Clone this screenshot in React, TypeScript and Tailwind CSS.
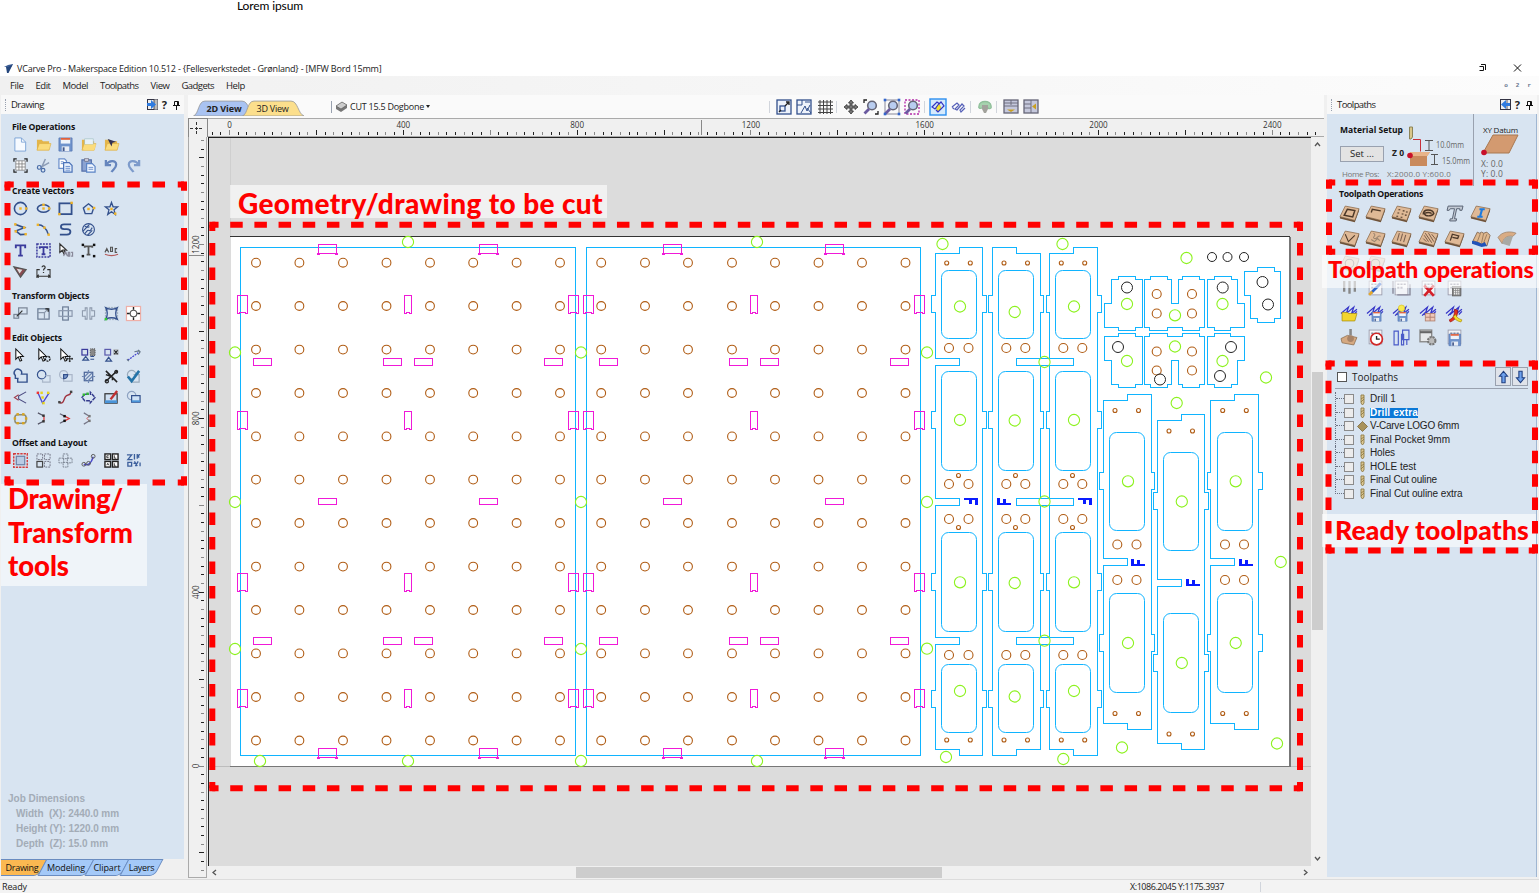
import React, { useLayoutEffect, useRef } from "react";

/* Text whose tracking is tuned so that it fills a given width. */
function T({ w, c = "", children }: { w: number; c?: string; children: string }) {
  const ref = useRef<HTMLSpanElement>(null);
  useLayoutEffect(() => {
    const el = ref.current;
    if (!el) return;
    el.style.letterSpacing = "0px";
    const natural = el.getBoundingClientRect().width;
    el.style.letterSpacing = `${(w - natural) / children.length}px`;
  }, [w, children]);
  return (
    <span ref={ref} className={`inline-block shrink-0 whitespace-pre ${c}`}>
      {children}
    </span>
  );
}

const N = "#33508c";
const Y = "#f0b429";

function Ic({ children, s = 16 }: { children?: React.ReactNode; s?: number }) {
  return (
    <svg width={s} height={s} viewBox="0 0 16 16" fill="none" stroke={N} strokeWidth="1.3" className="shrink-0 overflow-visible">
      {children}
    </svg>
  );
}

const dot = (x: number, y: number, f = Y) => <rect key={`${x}-${y}-${f}`} x={x - 1.3} y={y - 1.3} width="2.6" height="2.6" fill={f} stroke="none" />;

const folder = (
  <>
    <path d="M1 3h5l1.5 1.5H14V14H1z" fill="#e3b54a" stroke="none" />
    <path d="M1 14 3.5 7H16l-2 7z" fill="#fbdc7c" stroke="#d9a93c" strokeWidth=".6" />
  </>
);
const page = <path d="M2 1h7l4.5 4.5V15H2z" fill="#f6faff" stroke="#7ba3d6" strokeWidth="1" />;
const floppy = (
  <>
    <path d="M1 1h14v14H1z" fill="#6f93cc" stroke="#5578b4" strokeWidth=".8" />
    <rect x="3" y="1" width="10" height="6" fill="#eef3fa" stroke="none" />
    <rect x="3" y="1" width="10" height="2" fill="#e0603c" stroke="none" />
    <rect x="4" y="10" width="8" height="5" fill="#e8edf5" stroke="none" />
    <rect x="5" y="11" width="2" height="4" fill="#41588a" stroke="none" />
  </>
);
const cursor = <path d="M3 1v11l2.6-2.5L7.5 14l1.8-.8-1.9-4.2H11z" fill="#fff" stroke="#111" strokeWidth="1.1" />;

const fileIcons: React.ReactNode[][] = [
  [
    <>{page}<path d="M9 1v4.5h4.5" stroke="#7ba3d6" strokeWidth=".9" /></>,
    folder,
    floppy,
    <>{folder}<rect x="4" y="2" width="9" height="6" fill="#e8f2f8" stroke="#9bb" strokeWidth=".6" /><path d="M3 14 5 8h11l-2 6z" fill="#fbdc7c" stroke="none" /></>,
    <>{folder}<path d="M4 2l9 3-4 1-1 4z" fill="#335" stroke="none" /></>,
  ],
  [
    <><path d="M3 3h10v10H3zM6.3 3v10M9.6 3v10M3 6.3h10M3 9.6h10" fill="#fff" stroke="#777" strokeWidth=".8" /><path d="M1 4V1h3M12 1h3v3M15 12v3h-3M4 15H1v-3" stroke="#222" /></>,
    <><path d="M10 1 6 10M14 5 5 10" stroke="#8b9bb5" strokeWidth="1.6" /><circle cx="3.5" cy="10" r="2" stroke="#4a6da8" /><circle cx="7.5" cy="13" r="2" stroke="#4a6da8" /></>,
    <><path d="M1 1h6l2 2v8H1z" fill="#fff" stroke="#6b8fcb" /><path d="M6 5h6l3 3v7H6z" fill="#e7f0fc" stroke="#4a72b8" /><path d="M8 9h5M8 11h5M8 13h5M3 4h3M3 6h3" stroke="#5b84c6" strokeWidth=".9" /></>,
    <><rect x="1" y="2" width="10" height="12" fill="#8ba3d2" stroke="#556fa8" /><rect x="4" y="0.5" width="4" height="3" fill="#c9c9d8" stroke="#667" strokeWidth=".6" /><path d="M6 6h6l3 3v6H6z" fill="#eff5fe" stroke="#5b84c6" /><path d="M8 10h5M8 12h5" stroke="#5b84c6" strokeWidth=".9" /></>,
    <path d="M2 2v5.5h5.5M2.500 7C5 2.500 13 1.500 13 7c0 4-3 4.500-5 8" stroke="#6585bd" strokeWidth="2.4" />,
    <path d="M14 2v5.500H8.500M13.500 7C11 2.500 3 1.500 3 7c0 4 3 4.500 5 8" stroke="#7d9bcb" strokeWidth="2.400" />,
  ],
];

const createIcons: React.ReactNode[][] = [
  [
    <><circle cx="8" cy="8" r="6.500" strokeWidth="1.700" />{dot(8, 8)}{dot(14, 8)}</>,
    <><ellipse cx="8" cy="8" rx="6.500" ry="4" strokeWidth="1.700" />{dot(8, 4)}{dot(8, 8)}{dot(14, 8)}</>,
    <><rect x="1.500" y="2.500" width="13" height="11.500" strokeWidth="1.900" />{dot(14.500, 2)}{dot(1.500, 14)}</>,
    <><path d="M8 3 13.500 7.500 11.500 13.500h-7L2.500 7.500z" strokeWidth="1.500" />{dot(8, 8.500)}{dot(14, 7.500)}</>,
    <><path d="m8 1.500 1.700 4.700 4.800.1-3.800 3.100 1.300 4.900L8 11.500l-4 2.800 1.300-4.900L1.500 6.300l4.800-.1z" strokeWidth="1.400" />{dot(8, 8.500)}{dot(12, 13.500)}</>,
  ],
  [
    <><path d="M2 2.500 12 6 3 9.500 8 13.500 14 13" strokeWidth="1.700" />{dot(2.500, 2.500)}{dot(12, 6)}{dot(3, 10)}{dot(13.500, 13)}</>,
    <><path d="M2 3c6 0 9 4 11 10" strokeWidth="1.500" />{dot(2, 3)}{dot(9, 6)}{dot(13.500, 13.500)}</>,
    <path d="M14 2.500H6.500C2 2.500 2 7.500 6.500 7.500h3c5 0 5 5.500 0 6H2" strokeWidth="1.900" />,
    <><circle cx="8" cy="8" r="6.300" strokeWidth="1.200" /><path d="M2 10 9 2.500M4 12.500 7 9c1-1 2 1 3 0l2-3M7 14l5-5M4 5c2-1 3 2 5 0" strokeWidth="1.200" /></>,
  ],
  [
    <path d="M3 5.500v-3h10v3M8 2.500v11M5.500 13.500h5" stroke="#3a3a9c" strokeWidth="2" />,
    <><rect x="1" y="1" width="14" height="14" strokeDasharray="2 1.200" stroke="#3a3a9c" strokeWidth="1.600" /><path d="M4 6V4.500h8V6M8 4.500v8M6 12h4" stroke="#3a3a9c" strokeWidth="1.900" /></>,
    <><path d="M2 1v9l2.500-2.300L6.500 12 8 11.200 6.200 7.500H9z" fill="#fff" stroke="#333" /><path d="m6 14 2-5 2 5M11 14v-4h1.500v4zM14 10h1.500v4H14" stroke="#889" /></>,
    <><path d="M4 5V3.500h8V5M8 3.500v9M6 12.500h4" stroke="#555" strokeWidth="1.900" />{[[2, 2], [14, 2], [14, 14], [2, 14]].map(([a, b]) => dot(a, b, "#111"))}</>,
    <><path d="M1 12c5 2 9 2 14 0" stroke="#b45a5a" /><path d="m1 10 2-4 2 4M7 9V4.500h2V9zM14 6h-2v4h2" stroke="#555" strokeWidth="1.200" /></>,
  ],
  [
    <><path d="m1 3 13 3-6 8z" fill="#8a4a50" stroke="#555" /><path d="m4 5 6 1-3 4z" fill="#ddd" stroke="none" /></>,
    <><path d="M1 15V6h3M15 15V6h-3M1 13h14M3 11.500 1 13l2 1.500M13 11.500 15 13l-2 1.500" stroke="#333" strokeWidth="1.100" /><path d="M6.500 3.500C6.500 1.500 10 1.500 9.700 4 9 5.500 8 5 8 7M8 8.500v1.200" stroke="#333" strokeWidth="1.300" /></>,
  ],
];

const transformIcons: React.ReactNode[][] = [
  [
    <><rect x="6" y="2" width="9" height="6.500" stroke="#7a8696" /><rect x="1" y="9" width="5" height="4" stroke="#7a8696" /><path d="m4 11 6-6" stroke="#333" /></>,
    <><rect x="2" y="3" width="12" height="11" stroke="#6a7b93" /><path d="M2 7h7v7M9 7l4-4" stroke="#8a97aa" /><path d="M10 3h3v3" stroke="#222" /></>,
    <><rect x="5" y="1" width="6" height="14" stroke="#6d7d96" /><rect x="1" y="5" width="14" height="6" stroke="#8c99ae" /></>,
    <><path d="M6.500 2v12H4.500v-3H1.500V5h3V2zM9.500 2v12h2v-3h3V5h-3V2z" stroke="#8c98aa" strokeWidth="1.100" /></>,
    <><rect x="1.500" y="1.500" width="13" height="13" stroke="#89a" strokeWidth=".8" strokeDasharray="2 1" /><path d="M2 2c4 2 8 2 12 0-2 4-2 8 0 12-4-2-8-2-12 0 2-4 2-8 0-12z" strokeWidth="1.500" />{dot(2, 14, "#3c3")}</>,
    <><rect x=".5" y=".5" width="15" height="15" fill="#fff" stroke="#efb0a8" /><circle cx="8" cy="8" r="3.500" stroke="#555" strokeWidth="1.200" /><path d="M8 1v3M8 12v3M1 8h3M12 8h3" stroke="#222" strokeWidth="1.500" /></>,
  ],
];

const lens = <><circle cx="6" cy="6" r="4.500" /><path d="M7 11v3h8V7h-5" stroke="#a9b6c9" /></>;
const editIcons: React.ReactNode[][] = [
  [
    cursor,
    <>{cursor}<circle cx="12.500" cy="11.500" r="2.500" stroke="#111" strokeWidth="1.400" strokeDasharray="2 .8" /></>,
    <>{cursor}<path d="M12.500 8v7M9 11.500h7M11.500 9h2M11.500 14h2M10 10.500v2M15 10.500v2" stroke="#111" strokeWidth=".9" /></>,
    <><rect x="1" y="1.500" width="6" height="6" stroke="#3a3a9c" /><path d="m2 13 3-4 3 4zM10 9h4M10 12h4" /><rect x="10" y="1" width="5" height="7" fill="#888" stroke="#555" strokeDasharray="1 1" /></>,
    <><rect x="1" y="1.500" width="6" height="6" stroke="#5a5aac" /><path d="m2 14 3-4 3 4z" /><rect x="10.500" y="2" width="4.500" height="5" stroke="#999" strokeWidth=".8" /><path d="m11 2.500 3.500 4M14.500 2.500l-3.500 4" stroke="#222" /></>,
    <><path d="M2 13 13 5" stroke="#3a3acc" strokeDasharray="2 1" /><path d="M9 4l5-1M1 12l2 2M13 2l2 2-2 3" stroke="#678" /></>,
  ],
  [
    <path d="M6 10H2.500V7A4 4 0 1 1 9 5.500h6V14H5v-4" strokeWidth="1.500" />,
    lens,
    <><circle cx="6" cy="6" r="4.300" stroke="#a9b6c9" /><rect x="6" y="6" width="9" height="7" stroke="#a9b6c9" /><path d="M6 10.300V6h4.300A4.300 4.300 0 0 1 6 10.300z" fill="#7f9ccc" /></>,
    <><rect x="3.500" y="3.500" width="9" height="9" stroke="#4a6498" /><path d="M4 8l4.500-4.500M4 12l8-8M7.500 12.500 12 8M1 8h2M13 8h2M8 1v2M8 13v2" stroke="#6f87b3" /></>,
    <><path d="M2 2 14 14M14 2 2 13M2 6l6 2M9 12V8" stroke="#222" strokeWidth="1.600" /><circle cx="3" cy="13" r="1.700" stroke="#222" /><circle cx="13" cy="3" r="1.500" stroke="#222" /></>,
    <><circle cx="6" cy="6" r="4.500" stroke="#9ab" /><path d="M8 6h6v8H5" stroke="#9ab" /><path d="m2 8 4 5 8-11" stroke="#2473a8" strokeWidth="2.800" /></>,
  ],
  [
    <><path d="M14 2 6 6.500v3L14 14" stroke="#4a4a80" strokeWidth="1.200" /><path d="M6 5 1.500 8 6 11" stroke="#a04050" strokeWidth="1.200" /></>,
    <><path d="M2 3 7 14 14 3" stroke="#4a4acc" strokeWidth="1.400" />{dot(2, 3, "#e33")}{dot(6, 3, "#e8d41a")}{dot(13, 3, "#e8d41a")}{dot(7, 8, "#e8d41a")}{dot(8, 14, "#e8d41a")}</>,
    <><path d="M1 13c5 3 5-3 7-6s5 0 6-5" stroke="#a03440" strokeWidth="1.500" />{dot(1.500, 13, "#444")}{dot(14, 2, "#444")}</>,
    <><path d="M1 8 4 4.500h6V2.500L15 8l-5 5.500v-2H4z" strokeWidth="1.500" stroke="#333a8c" strokeDasharray="4 1" />{dot(3, 5, "#3b3")}{dot(7, 4, "#3b3")}</>,
    <><rect x="1" y="4" width="13" height="10" fill="#cfe0f2" stroke="#333" /><path d="M1 11h13v3H1z" fill="#4a94d8" stroke="none" /><path d="m7 10 7-9" stroke="#c03030" strokeWidth="2.600" /></>,
    <><circle cx="6" cy="6" r="4.500" stroke="#8da2c2" /><rect x="6" y="6" width="9" height="7" fill="#cfe2f6" /><path d="M6 11h9v2H6z" fill="#4a94d8" stroke="none" /></>,
  ],
  [
    <><rect x="2" y="4" width="12" height="9" rx="3" stroke="#8b8b78" strokeWidth="1.600" />{[[2, 8], [5, 3.500], [11, 3.500], [14, 8], [11, 13], [5, 13]].map(([a, b]) => dot(a, b, "#d9a520"))}</>,
    <><path d="m2 2 6 3M2 14l6-3" stroke="#556" /><path d="M8.500 5.500v5" stroke="#d33" />{dot(8, 5, "#333")}{dot(8, 11, "#333")}</>,
    <><path d="m2 3 5 2.500M2 13l5-2.500" stroke="#667" /><path d="m7 5.500 5 2.500-5 2.500" stroke="#d33" />{dot(7, 5.500, "#111")}{dot(7, 10.500, "#111")}</>,
    <><path d="m3 2 6 3.500M3 14l6-3.500" stroke="#778" /><path d="m9 5.500-3 2.500 3 2.500" stroke="#c44" strokeWidth=".8" />{dot(9, 5.500, "#777")}{dot(9, 10.500, "#777")}</>,
  ],
];

const offsetIcons: React.ReactNode[][] = [
  [
    <><rect x=".8" y=".8" width="14.400" height="14.400" stroke="#d23b3b" strokeDasharray="2.500 1" strokeWidth="1.500" /><rect x="3.500" y="3.500" width="9" height="9" fill="#b9cbe4" stroke="#6c83a8" /></>,
    <><g stroke="#667" strokeWidth=".9" strokeDasharray="2 1"><rect x="1" y="1" width="6" height="6" /><rect x="9" y="1" width="6" height="6" /><rect x="9" y="9" width="6" height="6" /></g><rect x="1" y="9" width="6" height="6" stroke="#444" /></>,
    <g stroke="#7a8290" strokeDasharray="2 .8" strokeWidth="1"><rect x="5.500" y="1" width="5" height="5" /><rect x="5.500" y="10" width="5" height="5" /><rect x="1" y="5.500" width="5" height="5" /><rect x="10" y="5.500" width="5" height="5" /></g>,
    <><path d="M3 12c5 2 8-1 10-8" stroke="#4a4acc" strokeWidth="1.600" /><g stroke="#555" strokeWidth="1"><circle cx="3" cy="12" r="2" /><circle cx="8" cy="11" r="2" /><circle cx="13" cy="3.500" r="2" /></g></>,
    <><g fill="#fff" stroke="#222" strokeWidth="1.500"><rect x="1" y="1" width="6" height="6" /><rect x="9" y="1" width="6" height="6" /><rect x="1" y="9" width="6" height="6" /><rect x="9" y="9" width="6" height="6" /></g><path d="M5 3H3v2h2M11 2.500v3h2M3 13l1-2 1 2M11 11v3h2" stroke="#222" strokeWidth=".9" /></>,
    <path d="M1 2h5L2 7h5M9 1v6M12 1v5M15 2c-2-1-2 2-1 3M2 10h4v4H2zM9 9l3 5M13 9l-3 5M15 10v4M8 11h2" stroke="#3c5f9c" strokeWidth="1.400" />,
  ],
];

function Section({ title, w, rows, c }: { title: string; w: number; rows: React.ReactNode[][]; c: string }) {
  return (
    <section className={`shrink-0 ${c}`}>
      <h2 className="flex h-[15px] items-center pl-[11px] pt-px text-[8.700px] font-bold leading-none text-[#111]">
        <T w={w}>{title}</T>
      </h2>
      {rows.map((r, i) => (
        <div key={i} className="grid h-[21px] grid-cols-[repeat(6,22.6px)] items-center justify-items-center pl-[8.500px]">
          {r.map((x, j) => (
            <Ic key={j} s={15}>{x}</Ic>
          ))}
        </div>
      ))}
    </section>
  );
}

function PanelHeader({ title, w, flip }: { title: string; w: number; flip?: boolean }) {
  return (
    <header className="flex h-[19px] shrink-0 items-center bg-[#f8f8f8] pl-1 pr-1 text-[9.500px] leading-none text-[#222]">
      <span className="mr-[5px] h-3 border-l border-dotted border-gray-400" />
      <T w={w}>{title}</T>
      <span className="flex-1" />
      <svg width="11" height="11" viewBox="0 0 11 11" className="mr-1">
        <rect x=".5" y=".5" width="10" height="10" fill="#eee" stroke="#334" />
        <path d="M7 0h4v11H7z" fill={flip ? "none" : "#bbb"} stroke="#334" strokeWidth=".8" />
        <path d={flip ? "M10 4H6V1L1 5.500 6 10V7h4z" : "M0 4h4V1l5 4.500L4 10V7H0z"} fill="#2f7be0" />
      </svg>
      <b className="mr-[6px] text-[11px]">?</b>
      <svg width="7" height="10" viewBox="0 0 7 10" fill="none" stroke="#111">
        <path d="M1.500 5.500v-4h4v4M0 5.500h7M3.500 5.500V10M4.500 1.500v4" />
      </svg>
    </header>
  );
}

/* Dashed frame whose dashes are centred on the corners. */
function Frame({ x, y, w, h, nx, ny }: { x: number; y: number; w: number; h: number; nx: number; ny: number }) {
  const d = 12.5;
  const px = w / nx;
  const py = h / ny;
  const H = `${d} ${px - d}`;
  const V = `${d} ${py - d}`;
  return (
    <g stroke="#f00" strokeWidth="6" strokeDashoffset={d / 2}>
      <path d={`M${x} ${y}h${w}M${x} ${y + h}h${w}`} strokeDasharray={H} />
      <path d={`M${x} ${y}v${h}M${x + w} ${y}v${h}`} strokeDasharray={V} />
      <path d={`M${x - 3} ${y}h6M${x + w - 3} ${y}h6M${x - 3} ${y + h}h6M${x + w - 3} ${y + h}h6`} strokeDashoffset="0" />
    </g>
  );
}

const HX = [256, 299.4, 343, 386.5, 430, 473.2, 516.6, 560, 601.2, 645, 688, 732, 775, 818.5, 862, 905.5];
const HY = [262.7, 306, 349.6, 393, 436.4, 479.6, 523, 566.6, 610, 653.4, 697, 740.5];
const GREEN = [
  [408, 242], [757, 242], [235, 352.5], [581, 352.5], [235, 502], [581, 502], [235, 649], [581, 649], [260, 761], [408, 761], [581, 761], [757, 761],
  [942.5, 244], [1062.5, 244], [1186.5, 258], [927, 352.5], [960, 306.5], [1014.7, 312], [1074, 306.5], [1044.5, 362], [960, 420], [1014.7, 420.5], [1074, 420],
  [927, 502], [1044.5, 501.5], [1127, 304], [1175, 315.3], [1222.5, 304], [1127, 361], [1175, 346.5], [1222.5, 361], [1266, 377.5], [1176.7, 403],
  [1128, 481.3], [1235.7, 481.3], [1181.8, 501.5], [960, 582.3], [1014.7, 583], [1074, 582.3], [927, 648.7], [1044.5, 640.7], [960, 691], [1014.7, 696.5], [1074, 691],
  [1128, 643], [1181.8, 663], [1235.7, 643], [1280.7, 562], [1277, 743.5], [1122, 747.5], [946, 757], [1063.3, 759],
];
const BLACK = [[1127, 287.5, 5.5], [1222.7, 287.5, 5.5], [1262.5, 282, 5.5], [1268, 304.5, 5.5], [1118, 347, 5.5], [1231, 347, 5.5], [1160, 379.5, 5.5], [1220, 376, 5.5], [1212, 257, 4.5], [1227.5, 257, 4.5], [1244, 257, 4.5]];
const BROWN: number[][] = [];
[294, 313.5, 351.5, 370.5].forEach((y) => BROWN.push([1156.7, y], [1192, y]));
[[949, 968.5], [1006.3, 1025.3], [1063.3, 1082.3]].forEach((p) => p.forEach((x) => [348, 484, 519, 655].forEach((y) => BROWN.push([x, y]))));
[1117.3, 1136.5, 1225, 1244].forEach((x) => BROWN.push([x, 544.5], [x, 580]));
const TINY: number[][] = [[958.5, 475.5], [958.5, 527.5], [1015.5, 475.5], [1015.5, 527.5], [1072.5, 475.5], [1072.5, 527.5]];
[946.7, 970.3, 1004, 1027.5, 1061.3, 1084.7].forEach((x) => TINY.push([x, 263], [x, 740]));
[1115, 1138.5, 1222.7, 1246.3].forEach((x) => TINY.push([x, 410.5], [x, 713.5]));
[1169, 1192.5].forEach((x) => TINY.push([x, 431], [x, 734]));

/* One leg: a slotted side with a lowered shoulder, and a plain side. */
function leg(a: number, b: number, top: number, bot: number, tabs: number[], tl: number, slots: number[], ta = 4, tb = 4) {
  const s = Math.sign(b - a);
  const m = a + s * 24;
  const ev = [...tabs.map((y) => ({ y, t: 1 })), ...slots.map((y) => ({ y, t: 0 }))].sort((p, q) => p.y - q.y);
  let d = `M${m} ${top}V${top + 6}H${a}`;
  ev.forEach((e) => {
    d += e.t ? `V${e.y}H${a - s * ta}V${e.y + tl}H${a}` : `V${e.y}H${m}V${e.y + 7}H${a}`;
  });
  d += `V${bot - 6}H${m}V${bot}H${b}`;
  [...tabs].reverse().forEach((y) => {
    d += `V${y + tl}H${b + s * tb}V${y}H${b}`;
  });
  return d + `V${top}Z`;
}
const T3 = [295.5, 411.5, 573.5, 690.5];
const S3 = [358.5, 498.5, 637.5];
const LEGS = [
  leg(935.5, 982.5, 247.5, 755.5, T3, 17, S3),
  leg(1040.5, 992.5, 247.5, 755.5, T3, 17, S3, 3, 4),
  leg(1049.5, 1097.5, 247.5, 755.5, T3, 17, S3, 3, 3.5),
  leg(1103.5, 1151.5, 394.5, 729.5, [472.5, 634.5], 17, [558.5], 4, 3),
  leg(1157.5, 1204.5, 414.5, 749.5, [492.5, 654.5], 17, [579.5], 4, 3.5),
  leg(1210.5, 1258.5, 394.5, 729.5, [472.5, 634.5], 17, [558.5], 3, 4),
];
const WINDOWS: number[][] = [];
[941.5, 998.5, 1055.5].forEach((x) => WINDOWS.push([x, 270.5, 68], [x, 371.5, 99], [x, 532.5, 99], [x, 664.5, 68]));
WINDOWS.push([1109.5, 432.5, 98], [1109.5, 593.5, 99], [1217.5, 432.5, 98], [1217.5, 593.5, 99], [1163.5, 452.5, 98], [1163.5, 613.5, 99]);

const BRACKETS = "M634 163H655V155H706V163H728V307H706V316H655V307H613V236H634ZM735 163H751V155H802V163H815V236H836V163H848V155H899V163H913V307H899V316H848V307H802V316H748V307H735ZM922 163H943V155H995V163H1013V236H1034V307H991V316H943V307H922Z";
const CORNER = "M1033 139H1072V128H1124V139H1142V281H1124V292H1072V281H1052V211H1033Z";

function magenta() {
  const r: React.ReactNode[] = [];
  [0, 345.5].forEach((o) => {
    [327, 488.5].forEach((x) => {
      [249.5, 753.5].forEach((y) => r.push(<path key={`a${x}${y}${o}`} d={`M${x + o - 9} ${y - 5}h18v9h1v1h-2v-1h-16v1h-2v-1h1z`} />));
      r.push(<path key={`b${x}${o}`} d={`M${x + o - 9} 498.500h18v6h-18z`} />);
    });
    [262.5, 392.5, 423.5, 553.5].forEach((x) => [362, 641].forEach((y) => r.push(<path key={`c${x}${y}${o}`} d={`M${x + o - 9} ${y - 3.5}h18v7h-18z`} />)));
    [[242.5, 10], [408, 7], [573.5, 10]].forEach(([x, w]) =>
      [304.5, 420.5, 582.5, 698.5].forEach((y) => r.push(<path key={`d${x}${y}${o}`} d={`M${x + o - w / 2} ${y - 9}h${w}v18h-2v-1h${4 - w}v1h-2z`} />)),
    );
  });
  return r;
}

function Drawing() {
  return (
    <svg viewBox="208 137 1103 729" className="block h-[729px] w-[1103px] shrink-0 bg-[#dcdcdc]" fill="none" shapeRendering="crispEdges">
      <path d="M208 137.500H1311" stroke="#222" />
      <path d="M208.500 137V866" stroke="#222" />
      <path d="M230.500 138V236" stroke="#cfcfcf" />
      <path d="M209 766.500H1311" stroke="#bdbdbd" />
      <rect x="231" y="237" width="1059" height="530" fill="#fff" />
      <path d="M230 236.500H1290" stroke="#333" />
      <path d="M230 766.500H1290" stroke="#777" />
      <path d="M1290 767V237" stroke="#777" strokeWidth="2" />
      <g stroke="#10b4ff">
        <rect x="240.500" y="247.500" width="335" height="508" />
        <rect x="586.500" y="247.500" width="334" height="508" />
        {LEGS.map((d) => (
          <path key={d} d={d} />
        ))}
        {[358.5, 498.5, 637.5].map((y) => (
          <path key={y} d={`M1040 ${y}h10M1040 ${y + 7}h10`} />
        ))}
        <g shapeRendering="auto">
          {WINDOWS.map(([x, y, h]) => (
            <rect key={`${x}-${y}`} x={x} y={y} width="35" height={h} rx="7" />
          ))}
        </g>
        <g transform="translate(900 225) scale(.33333)">
          <path d={BRACKETS + CORNER} vectorEffect="non-scaling-stroke" />
          <path d={BRACKETS} transform="translate(0 642) scale(1 -1)" vectorEffect="non-scaling-stroke" />
        </g>
      </g>
      <g stroke="#f019d8">{magenta()}</g>
      <g shapeRendering="auto">
        <g stroke="#b05c14" strokeWidth="1.100">
          {HX.map((x) => HY.map((y) => <circle key={`${x}-${y}`} cx={x} cy={y} r="4.400" />))}
          {BROWN.map(([x, y]) => (
            <circle key={`${x}-${y}`} cx={x} cy={y} r="4.500" />
          ))}
          {TINY.map(([x, y]) => (
            <circle key={`${x}-${y}`} cx={x} cy={y} r="2" />
          ))}
        </g>
        <g stroke="#8cf21e" strokeWidth="1.100">
          {GREEN.map(([x, y]) => (
            <circle key={`${x}-${y}`} cx={x} cy={y} r="5.600" />
          ))}
        </g>
        <g stroke="#222">
          {BLACK.map(([x, y, r]) => (
            <circle key={`${x}-${y}`} cx={x} cy={y} r={r} />
          ))}
        </g>
      </g>
      <g fill="#0a1cff">
        {[[978, 505], [1092, 505]].map(([x, y]) => (
          <path key={x} d={`M${x} ${y}v-7h-14v2h5v4h3v-4h3v5z`} />
        ))}
        {[[997, 498], [1131, 559], [1239, 559], [1186, 579]].map(([x, y]) => (
          <path key={x} d={`M${x} ${y}h3v5h3v-4h3v4h5v2h-14z`} />
        ))}
      </g>
    </svg>
  );
}

function TopRuler() {
  const ticks = [];
  for (let i = -2; i <= 125; i++) {
    const x = 229.5 + i * 8.69;
    if (x > 1318) break;
    const major = i % 10 === 0;
    ticks.push(<path key={i} d={`M${x} ${major ? 12 : 14}V17`} stroke={i % 3 ? "#222" : "#888"} />);
  }
  return (
    <svg viewBox="208 0 1116 19" className="block h-[19px] w-[1116px] bg-[#f0f0f0]" shapeRendering="crispEdges">
      {ticks}
      <path d="M701.500 2V17" stroke="#888" />
      <path d="M208 .500h1116M208 18.500h1116" stroke="#aaa" />
      {[0, 400, 800, 1200, 1600, 2000, 2400].map((v) => (
        <text key={v} x={229.5 + v * 0.4345} y="10" textAnchor="middle" textLength={String(v).length * 4.6} lengthAdjust="spacingAndGlyphs" className="fill-[#333] font-['Open_Sans'] text-[9.500px]">
          {v}
        </text>
      ))}
    </svg>
  );
}

function SideRuler() {
  const ticks = [];
  for (let i = -13; i <= 82; i++) {
    const y = 766 - i * 8.69;
    if (y < 139 || y > 873) continue;
    const major = i % 10 === 0;
    ticks.push(<path key={i} d={`M${major ? 199 : 201} ${y}H204`} stroke={i % 3 ? "#222" : "#888"} />);
  }
  return (
    <svg viewBox="188 137 20 741" className="block h-[741px] w-[20px] bg-[#f0f0f0]" shapeRendering="crispEdges">
      {ticks}
      <path d="M189 255.500H204" stroke="#888" />
      <path d="M188.500 137V877.500H206" stroke="#aaa" fill="none" />
      <path d="M206.500 137V878" stroke="#aaa" />
      {[0, 400, 800, 1200].map((v) => (
        <text key={v} transform={`translate(198.500 ${766 - v * 0.4345}) rotate(-90)`} textAnchor="middle" textLength={String(v).length * 4.6} lengthAdjust="spacingAndGlyphs" className="fill-[#333] font-['Open_Sans'] text-[9.500px]">
          {v}
        </text>
      ))}
    </svg>
  );
}

const mag = <><circle cx="9" cy="6.500" r="4.300" fill="#b9cdf0" stroke="#667" strokeWidth="1.600" /><path d="m6 10-4.500 4.500" stroke="#6a5aa0" strokeWidth="2.800" /></>;
const toolGroups: React.ReactNode[][] = [
  [
    <><rect x="1" y="1" width="14" height="14" fill="#eef3fb" /><rect x="4" y="7" width="5" height="5" /><path d="m9 7 4-4M10 3h3v3M3 13l2-2" stroke="#222" /></>,
    <><rect x="1" y="1" width="14" height="14" fill="#eef3fb" /><path d="M1 6h5V1M5 14l4-7 2 5 3-6M9 3h5M11 9l4 5" strokeWidth="1" /></>,
    <path d="M3 1v14M6.500 1v14M10 1v14M13.500 1v14M1 3h15M1 6.500h15M1 10h15M1 13.500h15" stroke="#444" strokeWidth="1" />,
  ],
  [
    <path d="m8 1 2.500 3H9v3h3V5.500L15 8l-3 2.500V9H9v3h1.500L8 15l-2.500-3H7V9H4v1.500L1 8l3-2.500V7h3V4H5.500z" fill="#777" stroke="#333" strokeWidth=".8" />,
    <>{mag}<path d="M1 4V1h3M15 12v3h-3" stroke="#222" /></>,
    <><rect x="1" y="1" width="14" height="14" stroke="#889" strokeWidth="1" />{mag}{[[1, 1], [15, 1], [1, 15], [15, 15]].map(([a, b]) => dot(a, b, "#36c"))}</>,
    <><rect x="1" y="1" width="14" height="14" stroke="#b32aa8" strokeDasharray="2 1.500" />{mag}</>,
  ],
  [
    <><rect x="0" y="0" width="16" height="16" fill="#d6eafc" stroke="#2d8ff0" strokeWidth="1.400" /><path d="m6 8 3-3 2 4-3 4z" fill="#f5e62c" stroke="#c8a800" strokeWidth=".6" /><path d="m2 8 5-5 2 1.500L5 10zM9 5l2-2 3 4-6 6-2-2" stroke="#3434c4" strokeWidth="1.200" /></>,
    <path d="m1 8 5-4 2 2-4 4 2 1 5-6 2 2-4 4 1 2 4-4M1 8l2 2" stroke="#5560b8" strokeWidth="1.200" />,
  ],
  [<><path d="M2 7c0-6 12-6 12 0 1 3-2 3-3 2H5C3 10 1 9 2 7z" fill="#a6d2ae" stroke="#8fbf9a" /><path d="M5 6h6v4L9 14H7l-2-4z" fill="#a2a29c" stroke="none" /></>],
  [
    <><rect x="1" y="1" width="14" height="13" fill="#c5c8dc" stroke="#667" /><path d="M1 7h14M1 4h14M8 1v5" stroke="#667" strokeWidth=".9" /><path d="M4 10.500h8l-4 2.500z" fill="#c9a020" stroke="none" /></>,
    <><rect x="1" y="1" width="14" height="13" fill="#c5c8dc" stroke="#667" /><path d="M8 1v13M1 5h7M1 9h7" stroke="#667" strokeWidth=".9" /><path d="m9 7.500 4-3v6z" fill="#c9a020" stroke="none" /></>,
  ],
];

const Plank = ({ children }: { children?: React.ReactNode }) => (
  <>
    <path d="m4 1 13 2.500-4 11L-1 11z" fill="#dfb996" stroke="#8a6848" strokeWidth=".7" />
    <path d="m-1 11 14 3.500 4-11v1.800l-4 11L-1 12.800z" fill="#6f5238" stroke="none" />
    <g stroke="#4c3828" strokeWidth="1">{children}</g>
  </>
);
const ops: React.ReactNode[][] = [
  [
    <Plank><path d="m6 4 7 1.300-2 6-8-1.600z" strokeWidth="1.400" /></Plank>,
    <Plank><path d="M4 7 5 4l8 1.500" strokeWidth="1.300" /></Plank>,
    <Plank><path d="M6 4v1M10 5v1M5 7v1M9 8v1M4 10v1M8 11v1M13 6v1M12 9v1" strokeWidth="1.700" /></Plank>,
    <Plank><path d="M3 9c0-6 9-5 10-1-2 3-8 3-9 0 2-1 4-2 7 0" strokeWidth="1.300" /></Plank>,
    <path d="M2 1h14l-1 4h-2V3.500h-3L8 13h2l-.5 2H3.500L4 13h2l2-9.500H4L3 5H1z" fill="#c3cad4" stroke="#566070" strokeWidth=".9" />,
    <Plank><path d="M7 4h5M9.500 4 7.500 11M5 11h5" stroke="#1c7be0" strokeWidth="2" /></Plank>,
  ],
  [
    <Plank><path d="m4 4 3 7 6-6" /></Plank>,
    <Plank><path d="M6 3c4 2-2 4 1 5s3-4 6-2M4 9l3 2 3-3 2 2" stroke="#9c8670" /></Plank>,
    <Plank><path d="M6 3 4 10M9 3.500l-2 7M12 4.500l-2 7" stroke="#7b6050" /></Plank>,
    <Plank><path d="m5 3 6 9M8 3l5 8M4 5l4 6M3 8l3 3M11 4l4 5" stroke="#6b5040" strokeWidth=".8" /></Plank>,
    <Plank><path d="M4 10 6 4l6 1.500L11 8 6 7" strokeWidth="1.200" /></Plank>,
    <><path d="m1 10 4-8 2 1 2-1 2 1 3-1 3 3-3 10z" fill="#e0b88e" stroke="#7c6048" strokeWidth=".8" /><path d="m0 10 5 1 4 2 3-2 2 4-5 1-9-3z" fill="#2152b8" stroke="none" /><path d="m8 3-3 8M11 3 9 12M14 4l-3 8" stroke="#9c7c5c" strokeWidth=".9" /></>,
    <><path d="M0 7C4 1 12 1 17 3l-3 3C8 5 5 8 4 13z" fill="#d9ac84" stroke="#9a8068" strokeWidth=".7" /><path d="M4 13C5 8 8 5 14 6l-3 9z" fill="#a8a9a4" stroke="none" /></>,
  ],
  [
    <g opacity=".6"><Plank><circle cx="8" cy="8" r="4" /></Plank></g>,
    <g opacity=".6"><Plank><circle cx="8" cy="8" r="4" fill="#d8b090" /></Plank></g>,
  ],
];
const zig = <path d="m0 8 7-6-2 6 7-6-2 6 5-4M2 10l3-3M12 9l3-3" stroke="#3535c8" strokeWidth="1.200" />;
const sheet = <><rect x="2" y="1" width="12" height="13" fill="#f2f4f8" stroke="#99a" strokeWidth=".8" /><path d="M4 4h2M7 4h2M10 4h2M4 7h2M7 7h2" stroke="#889" /></>;
const mini = <g transform="translate(4 6) scale(.62)">{floppy}</g>;
const mgmt: React.ReactNode[][] = [
  [
    <path d="M3 1v10M8 1v12M13 1v10M2 4h2M2 8h2M7 5h2M7 9h2M12 4h2M12 8h2" stroke="#888" strokeWidth="2.200" />,
    <>{sheet}<path d="m4 12 9-9" stroke="#2c62c8" strokeWidth="2.500" /><path d="m2 14 3-3" stroke="#e5a82c" strokeWidth="2.500" /></>,
    <>{sheet}<path d="M0 1v12M4 14h12V4" stroke="#889" /></>,
    <>{sheet}<path d="m4 5 9 10M13 5 4 15" stroke="#d4202a" strokeWidth="2.500" /></>,
    <>{sheet}<rect x="6" y="6" width="8" height="9" fill="#888" stroke="#555" strokeWidth=".6" /><path d="M7.500 9h5M7.500 11h5M7.500 13h5" stroke="#eee" strokeDasharray="1.200 .8" /></>,
  ],
  [
    <>{zig}<path d="M1 7h5l1 1h8l-2 7H1z" fill="#f3d52d" stroke="#a88f10" strokeWidth=".7" /></>,
    <>{zig}{mini}</>,
    <>{zig}{mini}<circle cx="8" cy="3" r="3" fill="#f7ea50" stroke="#d8c020" strokeWidth=".6" /></>,
    <>{zig}<rect x="5" y="8" width="9" height="7" fill="#f0c8b8" stroke="#b08070" strokeWidth=".8" /><path d="M9.500 8v7M5 11.500h9" stroke="#b08070" strokeWidth=".9" /></>,
    <>{zig}<path d="M3 14c4-2 5-4 5-10l3 1c0 6-2 9-7 11z" fill="#e0301e" stroke="#911" strokeWidth=".6" /><path d="M9 9c1 3 3 4 6 5l-1 2c-4-1-6-3-7-5z" fill="#f2e030" stroke="#a80" strokeWidth=".6" /></>,
  ],
  [
    <><path d="m0 9 6-3 9 2-3 7-11-2z" fill="#d5a982" stroke="#8a6a4c" strokeWidth=".7" /><path d="M9 0v6" stroke="#888" strokeWidth="2.400" /><circle cx="9" cy="9" r="3.200" fill="#a88468" stroke="none" /></>,
    <>{sheet}<circle cx="9" cy="9.500" r="5.500" fill="#fff" stroke="#d02828" strokeWidth="1.600" /><path d="M9 6.500v3h3" stroke="#222" /></>,
    <path d="M1 2v13h4V2zM8 5h2v10H8zM9 1h6v9H9zM13 10v5" stroke="#4a5ac8" strokeWidth="1.100" />,
    <><rect x="0" y="1" width="11" height="11" fill="#e6e8ea" stroke="#888" /><path d="M0 3h11" stroke="#666" strokeWidth="2" /><circle cx="11" cy="11" r="3.500" fill="#bbb" stroke="#777" strokeWidth="2" strokeDasharray="2 .8" /></>,
    <>{sheet}<g transform="translate(2 4) scale(.78)">{floppy}</g></>,
  ],
];

const PATHS: [string, number][] = [
  ["Drill 1", 26],
  ["Drill extra", 48],
  ["V-Carve LOGO 6mm", 89],
  ["Final Pocket 9mm", 80],
  ["Holes", 25],
  ["HOLE test", 46],
  ["Final Cut ouline", 67],
  ["Final Cut ouline extra", 92.5],
];

function OpRows({ rows }: { rows: React.ReactNode[][] }) {
  return (
    <>
      {rows.map((r, i) => (
        <div key={i} className="grid h-[24.900px] shrink-0 grid-cols-[repeat(7,26.300px)] items-center justify-items-center pl-[9px]">
          {r.map((x, j) => (
            <Ic key={j} s={17}>{x}</Ic>
          ))}
        </div>
      ))}
    </>
  );
}

function MaterialSetup() {
  return (
    <div className="flex h-[72px] shrink-0 pl-[13px] text-[8.500px] leading-none text-[#666]">
      <div className="flex w-[134px] flex-col border-r border-gray-400 pt-[12px]">
        <div className="flex h-[43px]">
          <div className="flex w-[64px] flex-col">
            <b className="text-[#111]"><T w={63}>Material Setup</T></b>
            <div className="mt-[11px] flex items-center gap-2 text-[#222]">
              <button className="h-4 w-[46px] border border-gray-400 bg-[#e3e3e3] text-[9.500px] leading-none">Set ...</button>
              <b><T w={12}>Z 0</T></b>
            </div>
          </div>
          <svg viewBox="1404 125 66 46" className="h-[46px] w-[66px] overflow-visible" fill="none">
            <path d="M1409.500 126h3v10l-1.500 2h-1.500z" fill="#d9c68a" stroke="#8c8458" />
            <path d="M1410 151h20l-3 4v10h-17z" fill="#c98a5c" />
            <path d="M1410 151h20l-2.500 4H1410z" fill="#e8b489" />
            <circle cx="1410" cy="154.500" r="2.800" fill="#c8102a" />
            <path d="M1413 138.500h7.500v12" stroke="#c8303a" />
            <path d="M1425 139.500h8M1429 139.500v10M1425 149.500h8M1431 153.500h7M1434.500 153.500v10M1431 163.500h7" stroke="#555" />
            <text x="1436" y="147" textLength="28" lengthAdjust="spacingAndGlyphs" className="fill-[#666] font-['Open_Sans'] text-[8.500px]">10.0mm</text>
            <text x="1442" y="163" textLength="28" lengthAdjust="spacingAndGlyphs" className="fill-[#666] font-['Open_Sans'] text-[8.500px]">15.0mm</text>
          </svg>
        </div>
        <div className="mt-px flex gap-2 pl-[2px] text-[8px] text-[#777]">
          <T w={37}>Home Pos:</T>
          <T w={64}>X:2000.0 Y:600.0</T>
        </div>
      </div>
      <div className="flex flex-col items-start pl-[7px] pt-[12px]">
        <span className="pl-[2px] text-[8px] text-[#222]"><T w={35}>XY Datum</T></span>
        <svg viewBox="0 0 38 22" className="h-[22px] w-[38px]">
          <path d="M12 1h25l-9 18H2z" fill="#d39a70" stroke="#a87850" />
          <circle cx="3" cy="18.500" r="2.800" fill="#c8102a" />
        </svg>
        <span className="mt-[4px]"><T w={22}>X: 0.0</T></span>
        <span className="mt-px"><T w={22}>Y: 0.0</T></span>
      </div>
    </div>
  );
}

function Tab({ label, w, fill, bold }: { label: string; w: number; fill: string; bold?: boolean }) {
  return (
    <div className="relative -mr-[13.500px] flex h-[16px] w-[62px] items-center justify-center text-[9px] leading-none text-[#222]">
      <svg viewBox="0 0 62 15" preserveAspectRatio="none" className="absolute inset-0 h-full w-full">
        <path d="M.5 15C6 13 5 1 12 1h37c7 0 7 12 13 14z" fill={fill} stroke="#999" strokeWidth=".8" />
      </svg>
      <span className={bold ? "relative font-bold" : "relative"}><T w={w}>{label}</T></span>
    </div>
  );
}

function BottomTab({ label, w, c, first }: { label: string; w: number; c: string; first?: boolean }) {
  return (
    <div className={`relative -mr-px flex h-[17px] items-center justify-center text-[9px] leading-none text-[#111] ${c}`}>
      <span className={`absolute inset-y-0 right-0 -skew-x-[28deg] rounded-br-[5px] border border-[#6a8cc0] ${first ? "-left-2 bg-[#fbb851]" : "left-0 bg-[#a4c9f8]"}`} />
      <span className="relative"><T w={w}>{label}</T></span>
    </div>
  );
}

const NOTE = "absolute bg-white/60 font-['Lato'] font-black text-[#f00]";

export default function App() {
  return (
    <div className="relative flex h-[893px] w-[1539px] flex-col overflow-hidden bg-white font-['Open_Sans',sans-serif] text-[#222]">
      <div className="h-[60px] shrink-0 pl-[237px] font-['Lato'] text-[12px] leading-[12px] text-black">
        <T w={66}>Lorem ipsum</T>
      </div>
      <div className="flex h-4 shrink-0 items-center pl-1 pr-[17px] text-[9px] leading-none">
        <svg width="9" height="9" viewBox="0 0 9 9" className="mr-1">
          <path d="M0 3h4L5 6l4-6-5 1z" fill="#3a5c94" />
          <path d="M2 3h2.500L9 0 4.500 9H3z" fill="#24467c" />
        </svg>
        <T w={364.500}>{"VCarve Pro - Makerspace Edition 10.512 - {Fellesverkstedet - Grønland} - [MFW Bord 15mm]"}</T>
        <span className="flex-1" />
        <svg width="44" height="8" viewBox="0 0 44 8" fill="none" stroke="#111">
          <path d="M1.500 2.500h4v4h-4M3 .500h4.500V6M36 .5l7 7M43 .5l-7 7" />
        </svg>
      </div>
      <nav className="flex h-[19px] shrink-0 items-center gap-3 bg-linear-to-r from-[#f0f0f0] to-[#fcfcfc] pl-[10px] pr-2 text-[9.500px] leading-none">
        <T w={13.500}>File</T>
        <T w={15}>Edit</T>
        <T w={25.500}>Model</T>
        <T w={38.500}>Toolpaths</T>
        <T w={19}>View</T>
        <T w={32.500}>Gadgets</T>
        <T w={19}>Help</T>
        <span className="flex-1" />
        <span className="flex gap-2 font-mono text-[6px] font-bold text-[#66738c]"><b>o</b><b>2</b><b>r</b></span>
      </nav>

      <div className="flex min-h-0 flex-1 bg-[#f0f0f0]">
        <aside className="flex w-[184px] shrink-0 flex-col pl-px">
          <PanelHeader title="Drawing" w={33} />
          <div className="flex h-[745px] shrink-0 flex-col bg-[#d8e4f1] pt-[4px]">
            <Section title="File Operations" w={63} rows={fileIcons} c="h-[65px] pt-px" />
            <Section title="Create Vectors" w={62} rows={createIcons} c="h-[105px]" />
            <Section title="Transform Objects" w={77} rows={transformIcons} c="h-[42px]" />
            <Section title="Edit Objects" w={50} rows={editIcons} c="h-[105px]" />
            <Section title="Offset and Layout" w={75} rows={offsetIcons} c="h-[60px]" />
            <span className="flex-1" />
            <div className="flex flex-col items-start pb-[8px] pl-[7px] font-['Liberation_Sans'] text-[10px] font-bold leading-[15px] text-[#a3acb7]">
              <T w={77}>Job Dimensions</T>
              <span className="pl-2"><T w={103}>{"Width  (X): 2440.0 mm"}</T></span>
              <span className="pl-2"><T w={103}>Height (Y): 1220.0 mm</T></span>
              <span className="pl-2"><T w={92}>{"Depth  (Z): 15.0 mm"}</T></span>
            </div>
          </div>
          <div className="flex h-[17px] shrink-0 overflow-hidden pr-4">
            <BottomTab label="Drawing" w={33} c="w-[42px]" first />
            <BottomTab label="Modeling" w={38} c="w-[48px]" />
            <BottomTab label="Clipart" w={27} c="w-[36px]" />
            <BottomTab label="Layers" w={25.500} c="w-[35px]" />
          </div>
        </aside>

        <main className="ml-1 flex w-[1136px] shrink-0 flex-col">
          <div className="flex h-[23px] shrink-0 items-center bg-[#fafafa] pl-[5px]">
            <div className="flex h-full w-[138px] items-end pb-[2px]">
              <Tab label="2D View" w={35} fill="#a9c3f2" bold />
              <Tab label="3D View" w={32} fill="#fcdf8c" />
            </div>
            <span className="h-3 w-px bg-gray-400" />
            <svg width="11" height="11" viewBox="0 0 11 11" className="ml-[4px]">
              <path d="M0 5 6 1l5 3v3L5 11 0 8z" fill="#777" />
              <path d="M0 5 6 1l5 3-6 4z" fill="#ccc" stroke="#555" strokeWidth=".6" />
            </svg>
            <span className="ml-[3px] pb-px text-[9px] leading-none"><T w={74}>CUT 15.5 Dogbone</T></span>
            <span className="ml-[2px] border-x-[2.500px] border-t-[3px] border-x-transparent border-t-[#222]" />
            <span className="w-[339px]" />
            <div className="flex items-center gap-[3.500px]">
              {toolGroups.map((g, i) => (
                <div key={i} className="flex items-center gap-[4.500px]">
                  <span className="mr-px h-3 w-px bg-gray-300" />
                  {g.map((x, j) => (
                    <Ic key={j}>{x}</Ic>
                  ))}
                </div>
              ))}
            </div>
          </div>
          <div className="flex h-[19px] shrink-0">
            <svg width="20" height="19" viewBox="0 0 20 19" fill="none" stroke="#333" className="shrink-0" shapeRendering="crispEdges">
              <path d="M.5 19V.5H19.500V18.500" stroke="#888" />
              <path d="M8.500 4v12" strokeDasharray="3 1.500" />
              <path d="M2 10.500h13" strokeDasharray="3 1.500" />
            </svg>
            <TopRuler />
          </div>
          <div className="flex h-[741px] shrink-0">
            <SideRuler />
            <div className="flex w-[1116px] flex-col">
              <div className="flex h-[729px]">
                <Drawing />
                <div className="flex w-[13px] flex-col items-center justify-between bg-[#f0f0f0] py-[5px]">
                  <svg width="7" height="5" viewBox="0 0 7 5" fill="none" stroke="#555" strokeWidth="1.300"><path d="m1 4 2.500-3L6 4" /></svg>
                  <span className="-mt-[2px] h-[258px] w-[11px] bg-[#cdcdcd]" />
                  <svg width="7" height="5" viewBox="0 0 7 5" fill="none" stroke="#555" strokeWidth="1.300"><path d="m1 1 2.500 3L6 1" /></svg>
                </div>
              </div>
              <div className="flex h-3 items-center bg-[#f0f0f0] pl-1 pr-[16px]">
                <svg width="5" height="7" viewBox="0 0 5 7" fill="none" stroke="#555" strokeWidth="1.300"><path d="M4 1 1 3.500 4 6" /></svg>
                <span className="ml-[359px] h-[11px] w-[366px] bg-[#cdcdcd]" />
                <span className="flex-1" />
                <svg width="5" height="7" viewBox="0 0 5 7" fill="none" stroke="#555" strokeWidth="1.300"><path d="m1 1 3 2.500L1 6" /></svg>
              </div>
            </div>
          </div>
        </main>

        <aside className="ml-[3px] flex w-[210px] shrink-0 flex-col">
          <PanelHeader title="Toolpaths" w={38.500} flip />
          <div className="flex h-[763px] shrink-0 flex-col border-r border-[#9fb6d2] bg-[#d8e4f1]">
            <MaterialSetup />
            <h2 className="flex h-[15px] shrink-0 items-center pl-3 pt-[2px] text-[8.700px] font-bold leading-none text-[#111]">
              <T w={84}>Toolpath Operations</T>
            </h2>
            <OpRows rows={[...ops, ...mgmt]} />
            <div className="mx-2 mt-[15px] flex h-[24px] shrink-0 items-center border-b border-gray-400 pl-[2px] text-[10px] leading-none">
              <span className="mr-[5px] h-[10px] w-[10px] border border-[#555] bg-white" />
              <T w={46}>Toolpaths</T>
              <span className="flex-1" />
              {["M8 1 13 7H10v8H6V7H3z", "M8 15 3 9h3V1h4v8h3z"].map((d) => (
                <span key={d} className="ml-px flex h-[19px] w-4 items-center justify-center border border-gray-400 bg-[#dfe3ea]">
                  <svg width="13" height="14" viewBox="0 0 16 16"><path d={d} fill="#6fa2ee" stroke="#1f3f80" strokeWidth="1.300" /></svg>
                </span>
              ))}
            </div>
            <ul className="ml-2 mt-[3px] shrink-0 font-['Liberation_Sans'] text-[10px] leading-none">
              {PATHS.map(([name, w], i) => (
                <li key={name} className="flex h-[13.500px] items-center">
                  <span className={`w-[9px] self-stretch border-dotted border-gray-500 ${i === 7 ? "mb-[6.500px] border-b border-l" : "border-l"}`}>
                    {i < 7 && <span className="block h-[7px] border-b border-dotted border-gray-500" />}
                  </span>
                  <span className="h-[10px] w-[10px] border border-[#8b8b8b] bg-[#ececec]" />
                  <svg width="11" height="11" viewBox="0 0 11 11" className="ml-[3px] mr-[2px]">
                    {i === 2 ? (
                      <path d="M5.500 .5 8 3l2.500 2.500L8 8l-2.500 2.500L3 8 .5 5.500 3 3z" fill="#a8925a" stroke="#7d6a3c" strokeWidth=".8" />
                    ) : (
                      <path d="M4 1h3v8l-1.500 2L4 9zM4 5l3-2M4 8l3-3" fill="#dcc894" stroke="#8f7a44" strokeWidth=".9" />
                    )}
                  </svg>
                  <span className={i === 1 ? "bg-[#0a78d7] font-bold text-white" : ""}><T w={w}>{name}</T></span>
                </li>
              ))}
            </ul>
          </div>
        </aside>
      </div>

      <footer className="flex h-[14px] shrink-0 items-center border-t border-[#dcdcdc] bg-[#f3f3f3] pl-[2px] text-[9px] leading-none">
        <T w={25}>Ready</T>
        <span className="w-[1103px]" />
        <T w={94}>X:1086.2045 Y:1175.3937</T>
        <span className="ml-[36px] h-[10px] w-px bg-gray-300" />
      </footer>

      <div className={`${NOTE} left-[230px] top-[185px] flex h-[33px] w-[376.500px] items-center pl-2 pt-[3px] text-[28px] leading-none`}>
        <T w={365}>Geometry/drawing to be cut</T>
      </div>
      <div className={`${NOTE} left-px top-[484px] flex h-[102px] w-[146px] flex-col items-start pl-[7px] text-[27.500px] leading-[33.700px]`}>
        <T w={115} c="-mt-[2px]">Drawing/</T>
        <T w={125}>Transform</T>
        <T w={61}>tools</T>
      </div>
      <div className={`${NOTE} left-[1322px] top-[255px] flex h-[33px] w-[217px] items-center pb-[4px] pl-[6px] text-[23.500px] leading-none`}>
        <T w={206}>Toolpath operations</T>
      </div>
      <div className={`${NOTE} left-[1322px] top-[514px] flex h-[33px] w-[214px] items-center pb-px pl-[13px] text-[26.500px] leading-none`}>
        <T w={194}>Ready toolpaths</T>
      </div>
      <svg viewBox="0 0 1539 893" className="pointer-events-none absolute inset-0 h-[893px] w-[1539px]" fill="none">
        <Frame x={7.5} y={184.500} w={176.500} h={298} nx={7} ny={12} />
        <Frame x={212.300} y={224.700} w={1087.700} h={563.600} nx={45} ny={23} />
        <Frame x={1329} y={182.500} w={206} h={69.200} nx={9} ny={3} />
        <Frame x={1328.500} y={363.500} w={206.500} h={187} nx={9} ny={8} />
      </svg>
    </div>
  );
}
